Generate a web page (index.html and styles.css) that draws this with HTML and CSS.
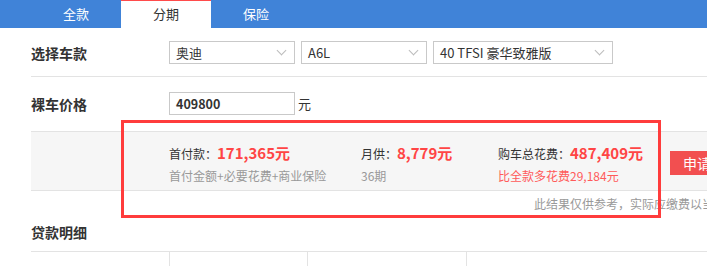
FILE: index.html
```html
<!DOCTYPE html>
<html lang="zh-CN">
<head>
<meta charset="utf-8">
<title>分期</title>
<link rel="stylesheet" href="styles.css">
</head>
<body>
<div class="tabs">
  <div class="tab">全款</div>
  <div class="tab active">分期</div>
  <div class="tab">保险</div>
</div>
<div class="main">
  <div class="row row-car">
    <div class="label">选择车款</div>
    <div class="select s1"><span>奥迪</span><i class="arrow"></i></div>
    <div class="select s2"><span>A6L</span><i class="arrow"></i></div>
    <div class="select s3"><span>40 TFSI 豪华致雅版</span><i class="arrow"></i></div>
  </div>
  <div class="row row-price">
    <div class="label">裸车价格</div>
    <div class="input">409800</div>
    <span class="unit">元</span>
  </div>
  <div class="result">
    <div class="col c1">
      <div class="line1">首付款：<b class="num">171,365元</b></div>
      <div class="line2">首付金额+必要花费+商业保险</div>
    </div>
    <div class="col c2">
      <div class="line1">月供：<b class="num">8,779元</b></div>
      <div class="line2">36期</div>
    </div>
    <div class="col c3">
      <div class="line1">购车总花费：<b class="num">487,409元</b></div>
      <div class="line2 pink">比全款多花费29,184元</div>
    </div>
    <div class="btn">申请贷款</div>
  </div>
  <div class="note">此结果仅供参考，实际应缴费以当地为准</div>
  <div class="section-title">贷款明细</div>
  <div class="table">
    <div class="cell w1"></div>
    <div class="cell w2"></div>
    <div class="cell w3"><span>30%</span><span>40%</span><span>50%</span></div>
    <div class="cell w4"></div>
  </div>
</div>
<div class="highlight"></div>
</body>
</html>
```
FILE: styles.css
```css
html, body {
  margin: 0;
  padding: 0;
  overflow: hidden;
  background: #fff;
}
body {
  font-family: "Noto Sans CJK SC", "Noto Sans", sans-serif;
  color: #333;
  font-size: 12px;
  width: 707px;
  height: 266px;
  position: relative;
}
.tabs {
  display: flex;
  height: 28px;
  background: #4083d8;
  padding-left: 31px;
}
.tab {
  width: 90px;
  text-align: center;
  line-height: 28px;
  color: #fff;
  font-size: 13px;
}
.tab.active {
  background: #fff;
  color: #333;
  box-shadow: inset 0 1px 0 #ff4b4b;
}
.main {
  padding-left: 31px;
  width: 1000px;
}
.row {
  display: flex;
  align-items: center;
}
.label {
  width: 138px;
  font-size: 14px;
  font-weight: 700;
  color: #333;
}
.row-car {
  padding: 13px 0 12px;
  border-bottom: 1px solid #e3e3e3;
}
.select {
  box-sizing: border-box;
  height: 23px;
  border: 1px solid #c9c9c9;
  display: flex;
  align-items: center;
  justify-content: space-between;
  padding: 0 9px 0 6px;
  font-size: 13px;
  margin-right: 6px;
  color: #333;
}
.s1, .s2 { width: 126px; }
.s3 { width: 180px; }
.arrow {
  width: 6px;
  height: 6px;
  border-right: 1px solid #bcbcbc;
  border-bottom: 1px solid #bcbcbc;
  transform: rotate(45deg);
  margin-top: -4px;
}
.row-price {
  padding-top: 15px;
  padding-bottom: 16px;
}
.input {
  box-sizing: border-box;
  width: 126px;
  height: 23px;
  border: 1px solid #c9c9c9;
  padding-left: 6px;
  line-height: 21px;
  font-size: 12.5px;
  font-weight: 700;
  color: #333;
}
.unit {
  margin-left: 3px;
  font-size: 13px;
}
.result {
  display: flex;
  align-items: flex-start;
  background: #f6f6f6;
  border-top: 1px solid #e3e3e3;
  border-bottom: 1px solid #e3e3e3;
  padding: 11px 0 5px 138px;
  height: 42px;
}
.col .line1 {
  line-height: 20px;
  font-size: 12px;
  color: #333;
}
.col .line2 {
  margin-top: 2px;
  line-height: 20px;
  font-size: 12px;
  color: #999;
}
.col .line2.pink { color: #ff5a5a; }
.num {
  color: #ff4545;
  font-size: 15px;
  font-weight: 700;
}
.c1 { width: 192px; }
.c2 { width: 137px; }
.c3 { width: 172px; }
.btn {
  margin-top: 8px;
  height: 24px;
  line-height: 24px;
  background: #f24f50;
  color: #fff;
  font-size: 14px;
  padding: 0 13px;
  width: 60px;
}
.note {
  margin-top: 3px;
  margin-left: 503px;
  line-height: 20px;
  color: #999;
  font-size: 12px;
  white-space: nowrap;
}
.section-title {
  margin-top: 8px;
  line-height: 20px;
  font-size: 14px;
  font-weight: 700;
  margin-bottom: 9px;
}
.table {
  display: flex;
  border-top: 1px solid #e3e3e3;
  height: 40px;
}
.cell {
  box-sizing: border-box;
  height: 40px;
}
.w1 { width: 138px; }
.w2 { width: 138px; border-left: 1px solid #e3e3e3; }
.w3 {
  width: 159px;
  border-left: 1px solid #e3e3e3;
  padding: 9px 0 0 23px;
  color: #999;
  font-size: 12px;
  display: flex;
  gap: 22px;
}
.w4 { width: 200px; border-left: 1px solid #e3e3e3; }
.highlight {
  position: absolute;
  left: 121px;
  top: 120px;
  width: 540px;
  height: 98px;
  box-sizing: border-box;
  border: 3px solid #ff3c3c;
}
```
